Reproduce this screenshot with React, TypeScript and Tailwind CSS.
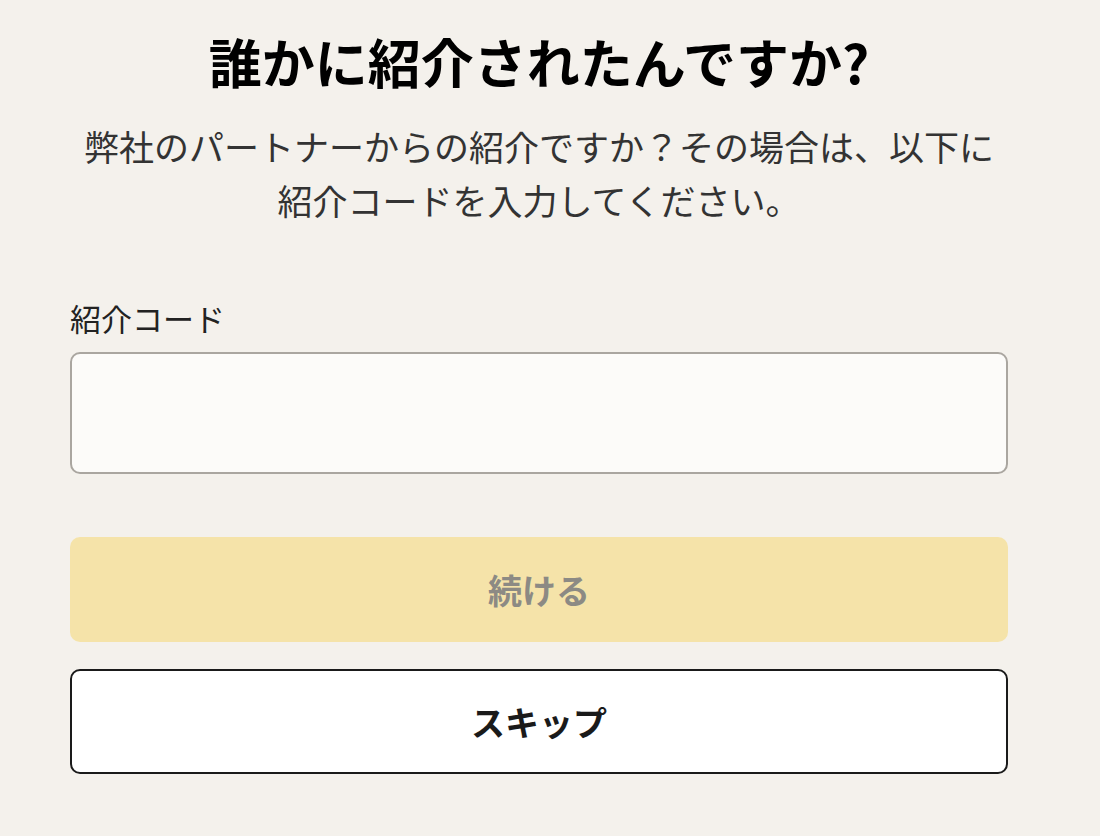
export default function App() {
  return (
    <div
      className="min-h-[836px] w-full bg-[#f4f1ec] pl-[70px] pr-[92px] pt-[29px]"
      style={{ fontFamily: '"Noto Sans CJK JP", "Noto Sans", sans-serif' }}
    >
      <div className="flex flex-col">
        {/* Heading */}
        <h1 className="text-center text-[53px] font-bold leading-[64px] text-black">
          誰かに紹介されたんですか?
        </h1>
        <p className="mt-[26px] text-center text-[35px] leading-[54px] text-[#333333]">
          弊社のパートナーからの紹介ですか？その場合は、以下に
          <br />
          紹介コードを入力してください。
        </p>

        {/* Form */}
        <label
          htmlFor="referral"
          className="mt-[72px] text-[31px] leading-[38px] text-[#222222]"
        >
          紹介コード
        </label>
        <input
          id="referral"
          type="text"
          className="mt-[15px] h-[122px] w-full rounded-[10px] border-2 border-[#aaa6a0] bg-[#fcfbf9] px-6 text-[32px] outline-none"
        />

        <button
          disabled
          className="mt-[63px] flex h-[105px] w-full items-center justify-center rounded-[10px] bg-[#f5e3a9] text-[34px] font-bold text-[#8c8a84]"
        >
          続ける
        </button>
        <button className="mt-[27px] flex h-[105px] w-full items-center justify-center rounded-[10px] border-2 border-[#1a1a1a] bg-white text-[34px] font-bold text-[#1a1a1a]">
          スキップ
        </button>
      </div>
    </div>
  );
}
